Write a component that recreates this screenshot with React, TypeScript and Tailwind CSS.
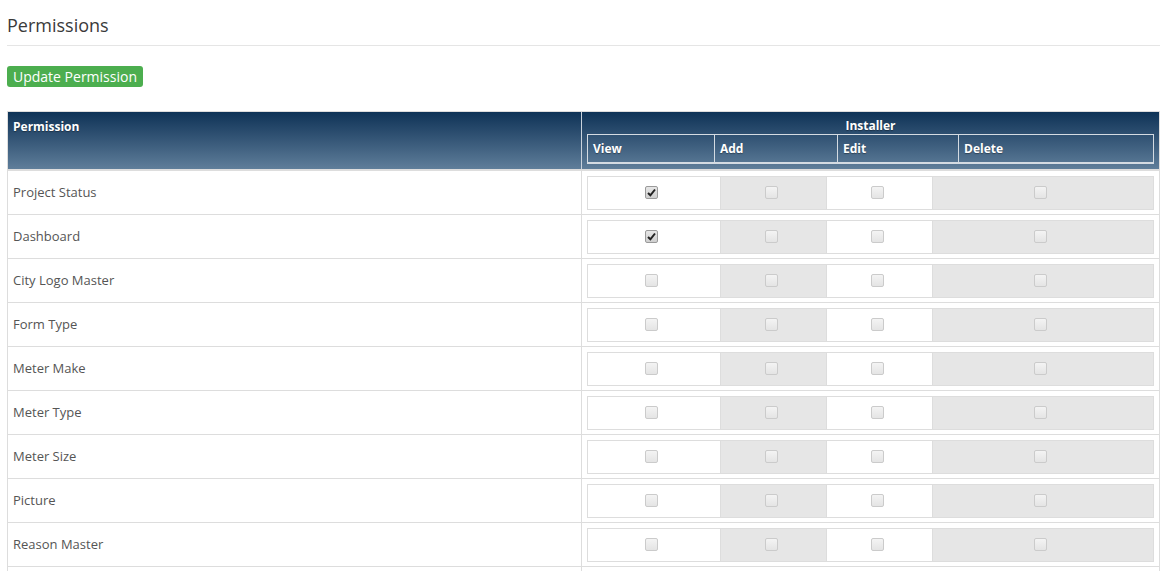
const rows: { name: string; view: boolean }[] = [
  { name: 'Project Status', view: true },
  { name: 'Dashboard', view: true },
  { name: 'City Logo Master', view: false },
  { name: 'Form Type', view: false },
  { name: 'Meter Make', view: false },
  { name: 'Meter Type', view: false },
  { name: 'Meter Size', view: false },
  { name: 'Picture', view: false },
  { name: 'Reason Master', view: false },
  { name: 'Region Master', view: false },
];

function Check({ checked }: { checked?: boolean }) {
  return (
    <span
      className={
        checked
          ? 'flex h-[13px] w-[13px] items-center justify-center rounded-[2px] border border-[#9a9a9a] bg-gradient-to-b from-[#e6e6e6] to-[#cfcfcf]'
          : 'flex h-[13px] w-[13px] items-center justify-center rounded-[2px] border border-[#cbcbcb] bg-gradient-to-b from-[#f4f4f4] to-[#e4e4e4]'
      }
    >
      {checked && (
        <svg width="9" height="9" viewBox="0 0 9 9">
          <path d="M1 5 L3.4 7.3 L8 1.5" fill="none" stroke="#222" strokeWidth="2" />
        </svg>
      )}
    </span>
  );
}

function Row({ name, view }: { name: string; view: boolean }) {
  return (
    <div className="grid h-[44px] grid-cols-[573px_1fr] border-b border-[#dddddd]">
      <div className="flex items-center pl-[5px] text-[13px] text-[#555]">{name}</div>
      <div className="border-l border-[#dddddd] px-[5px] pt-[5px]">
        <div className="grid h-[34px] grid-cols-[132px_106px_106px_1fr] border border-[#dddddd]">
          <div className="flex items-center justify-center bg-white pb-[2px] pr-[5px]">
            <Check checked={view} />
          </div>
          <div className="flex items-center justify-center border-l border-[#dddddd] bg-[#e6e6e6] pb-[2px] pr-[5px]">
            <Check />
          </div>
          <div className="flex items-center justify-center border-l border-[#dddddd] bg-white pb-[2px] pr-[5px]">
            <Check />
          </div>
          <div className="flex items-center justify-center border-l border-[#dddddd] bg-[#e6e6e6] pb-[2px] pr-[5px]">
            <Check />
          </div>
        </div>
      </div>
    </div>
  );
}

export default function App() {
  return (
    <div className="min-h-screen bg-white pl-[7px] pr-[15px] font-['Open_Sans',sans-serif]">
      <h1 className="border-b border-[#e5e5e5] pb-[8px] pt-[13px] text-[18px] leading-[24px] text-[#3a3a3a]">
        Permissions
      </h1>
      <button
        type="button"
        className="mt-[20px] flex h-[21px] items-center rounded-[3px] bg-[#4cae4f] px-[6px] text-[14px] text-white"
      >
        Update Permission
      </button>
      <div className="mt-[24px] w-[1153px] border border-[#dddddd]">
        <div className="grid h-[59px] grid-cols-[573px_1fr] border-b-2 border-[#dddddd] bg-gradient-to-b from-[#0e3357] to-[#5f7e9a] text-[12px] font-bold text-white [text-shadow:0_1px_1px_rgba(0,0,0,0.35)]">
          <div className="pl-[5px] pt-[6px]">Permission</div>
          <div className="border-l border-[#c9d2dc] px-[5px] pt-[6px]">
            <div className="text-center leading-[16px]">Installer</div>
            <div className="grid h-[30px] grid-cols-[126px_123px_121px_1fr] border border-b-2 border-[#d4dbe2]">
              <div className="flex items-center pl-[5px]">View</div>
              <div className="flex items-center border-l border-[#d4dbe2] pl-[5px]">Add</div>
              <div className="flex items-center border-l border-[#d4dbe2] pl-[5px]">Edit</div>
              <div className="flex items-center border-l border-[#d4dbe2] pl-[5px]">Delete</div>
            </div>
          </div>
        </div>
        {rows.map((r) => (
          <Row key={r.name} name={r.name} view={r.view} />
        ))}
      </div>
    </div>
  );
}
